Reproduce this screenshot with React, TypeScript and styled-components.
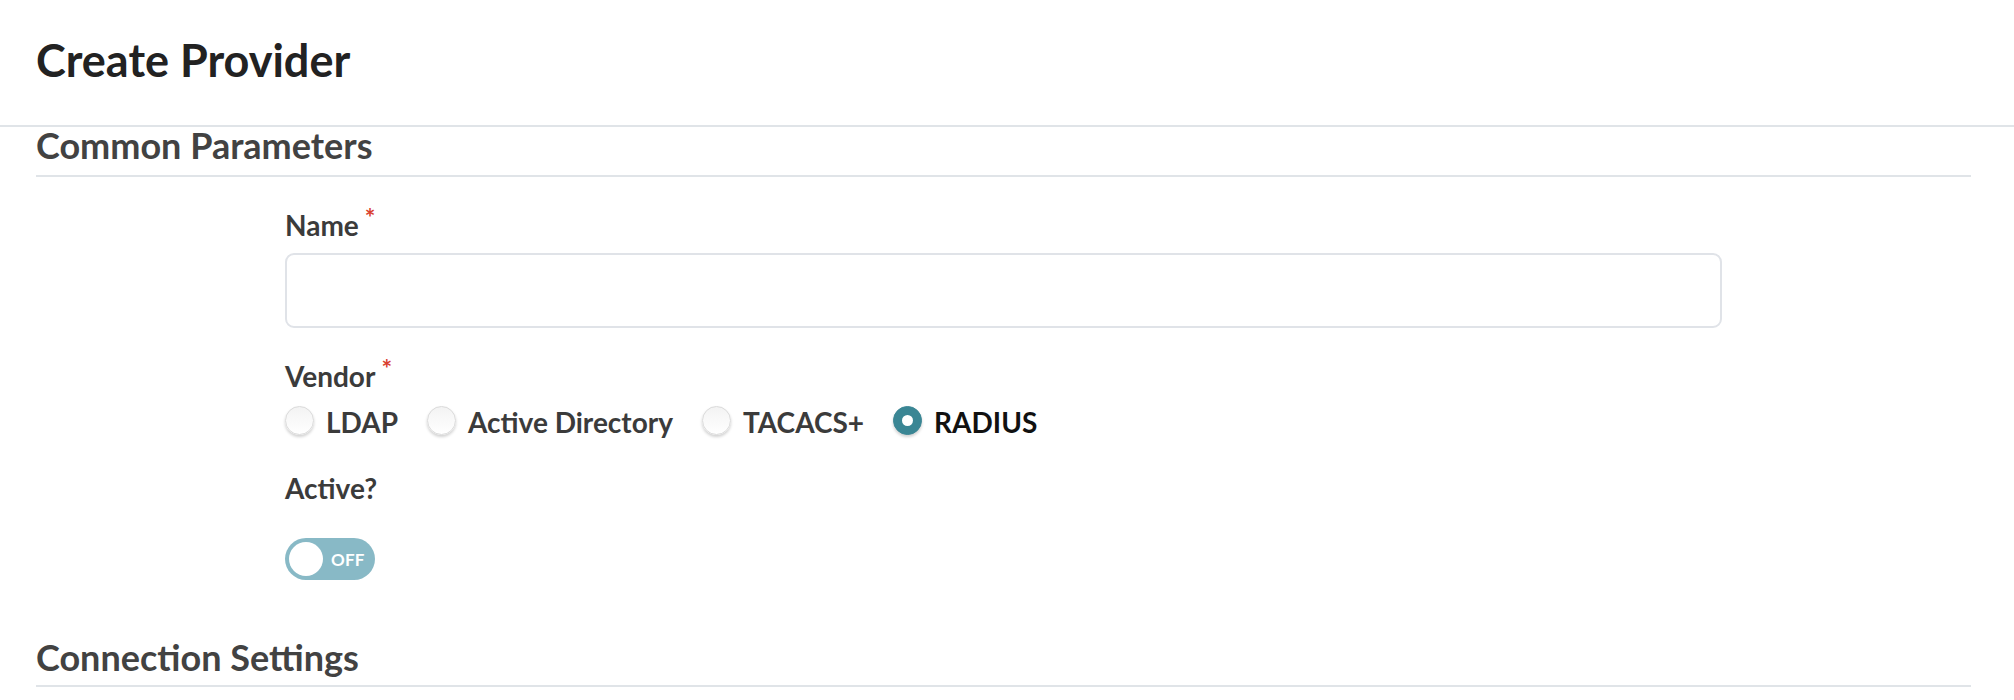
import React, { useState } from "react";
import styled, { createGlobalStyle } from "styled-components";

const GlobalStyle = createGlobalStyle`
  html, body {
    margin: 0;
    padding: 0;
    background: #ffffff;
    font-family: Lato, "Open Sans", "Liberation Sans", sans-serif;
  }
  * { box-sizing: border-box; }
`;

const Page = styled.div`
  width: 100%;
  min-height: 700px;
  background: #fff;
`;

const Header = styled.header`
  padding: 34px 36px 39px;
  border-bottom: 2px solid #e0e4e8;
`;

const Title = styled.h1`
  margin: 0;
  font-size: 45px;
  line-height: 52px;
  font-weight: 700;
  color: #222222;
`;

const Content = styled.main`
  padding: 0 43px 0 36px;
`;

const SectionTitle = styled.h2<{ $top?: number; $pad?: number }>`
  margin: ${(p) => p.$top ?? 0}px 0 0;
  padding-bottom: ${(p) => p.$pad ?? 12}px;
  font-size: 36px;
  line-height: 36px;
  font-weight: 700;
  color: #424242;
  border-bottom: 2px solid #e0e4e8;
`;

const FormColumn = styled.div`
  margin-left: 249px;
  width: 1437px;
  display: flex;
  flex-direction: column;
  padding-top: 31px;
`;

const FieldLabel = styled.label<{ $gap?: number }>`
  display: block;
  font-size: 28px;
  line-height: 34px;
  font-weight: 700;
  color: #3b3b3b;
  margin-bottom: ${(p) => p.$gap ?? 0}px;
`;

const Required = styled.span`
  color: #d9402f;
  font-size: 25px;
  line-height: 0;
  position: relative;
  top: -9px;
  margin-left: 6px;
`;

const TextInput = styled.input`
  width: 100%;
  height: 75px;
  border: 2px solid #e0e3e8;
  border-radius: 9px;
  background: #fff;
  font-family: inherit;
  font-size: 26px;
  padding: 0 18px;
  outline: none;
  margin-bottom: 31px;
`;

const RadioRow = styled.div`
  display: flex;
  align-items: center;
  gap: 29px;
  margin-top: 13px;
  margin-bottom: 33px;
`;

const RadioOption = styled.label<{ $checked: boolean }>`
  display: flex;
  align-items: center;
  gap: 12px;
  cursor: pointer;
  font-size: 28px;
  line-height: 32px;
  font-weight: 700;
  color: ${(p) => (p.$checked ? "#111111" : "#3b3b3b")};
`;

const RadioCircle = styled.span<{ $checked: boolean }>`
  position: relative;
  top: -2px;
  width: 29px;
  height: 29px;
  border-radius: 50%;
  flex: none;
  display: flex;
  align-items: center;
  justify-content: center;
  background: ${(p) =>
    p.$checked ? "#3a8694" : "linear-gradient(#f3f3f3, #ffffff)"};
  border: 1px solid ${(p) => (p.$checked ? "#3a8694" : "#dadada")};
  box-shadow: 0 2px 3px rgba(0, 0, 0, 0.18);
  &::after {
    content: "";
    display: ${(p) => (p.$checked ? "block" : "none")};
    width: 11px;
    height: 11px;
    border-radius: 50%;
    background: #ffffff;
  }
`;

const Toggle = styled.button<{ $on: boolean }>`
  margin-top: 33px;
  width: 90px;
  height: 42px;
  border-radius: 21px;
  border: none;
  padding: 0 4px;
  background: ${(p) => (p.$on ? "#3a8694" : "#88b9c6")};
  display: flex;
  align-items: center;
  gap: 8px;
  cursor: pointer;
`;

const Knob = styled.span`
  width: 34px;
  height: 34px;
  border-radius: 50%;
  background: #ffffff;
  flex: none;
`;

const ToggleText = styled.span`
  font-family: Lato, "Liberation Sans", sans-serif;
  font-size: 17px;
  font-weight: 700;
  color: #ffffff;
  letter-spacing: 0.2px;
`;

const vendors = ["LDAP", "Active Directory", "TACACS+", "RADIUS"];

export default function App() {
  const [vendor, setVendor] = useState("RADIUS");
  const [active, setActive] = useState(false);
  return (
    <Page>
      <GlobalStyle />
      <Header>
        <Title>Create Provider</Title>
      </Header>
      <Content>
        <SectionTitle>Common Parameters</SectionTitle>
        <FormColumn>
          <FieldLabel $gap={11}>
            Name<Required>*</Required>
          </FieldLabel>
          <TextInput type="text" />
          <FieldLabel>
            Vendor<Required>*</Required>
          </FieldLabel>
          <RadioRow>
            {vendors.map((v) => (
              <RadioOption
                key={v}
                $checked={vendor === v}
                onClick={() => setVendor(v)}
              >
                <RadioCircle $checked={vendor === v} />
                {v}
              </RadioOption>
            ))}
          </RadioRow>
          <FieldLabel>Active?</FieldLabel>
          <div>
            <Toggle $on={active} onClick={() => setActive(!active)}>
              <Knob />
              <ToggleText>{active ? "ON" : "OFF"}</ToggleText>
            </Toggle>
          </div>
        </FormColumn>
        <SectionTitle $top={59} $pad={10}>
          Connection Settings
        </SectionTitle>
      </Content>
    </Page>
  );
}
